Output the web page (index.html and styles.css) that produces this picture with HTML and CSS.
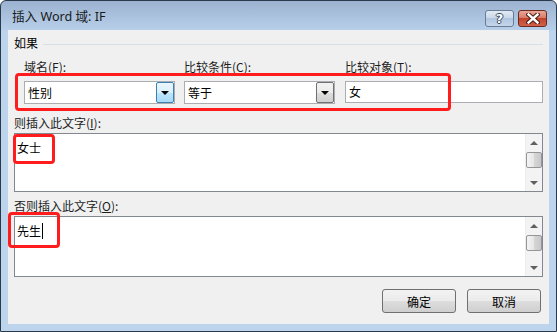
FILE: index.html
```html
<!DOCTYPE html>
<html lang="zh-CN">
<head>
    <meta charset="UTF-8">
    <title>插入 Word 域: IF</title>
    <link rel="stylesheet" href="styles.css">
</head>
<body>
    <div class="window">
        <div class="titlebar">
            <span class="title">插入 Word 域: IF</span>
            <div class="caption-buttons">
                <div class="cap-btn help">?</div>
                <div class="cap-btn close">
                    <svg width="14" height="11" viewBox="0 0 14 11">
                        <path d="M2.5 1.5 L11.5 9.5 M11.5 1.5 L2.5 9.5" stroke="#4a1b12" stroke-width="4.4" stroke-linecap="square"/>
                        <path d="M2.5 1.5 L11.5 9.5 M11.5 1.5 L2.5 9.5" stroke="#fff" stroke-width="2.4" stroke-linecap="square"/>
                    </svg>
                </div>
            </div>
        </div>

        <div class="client">
            <div class="group-title">
                <span>如果</span>
                <div class="group-line"></div>
            </div>

            <div class="fields">
                <div class="field field-name">
                    <label>域名(<u>F</u>):</label>
                    <div class="combo">
                        <span class="combo-text">性别</span>
                        <div class="drop active"><span class="arrow"></span></div>
                    </div>
                </div>
                <div class="field field-cond">
                    <label>比较条件(<u>C</u>):</label>
                    <div class="combo">
                        <span class="combo-text">等于</span>
                        <div class="drop"><span class="arrow"></span></div>
                    </div>
                </div>
                <div class="field field-target">
                    <label>比较对象(<u>T</u>):</label>
                    <div class="textbox">女</div>
                </div>
                <div class="mark mark-fields"></div>
            </div>

            <label class="area-label">则插入此文字(<u>I</u>):</label>
            <div class="textarea area-then">
                <div class="area-text">女士</div>
                <div class="scrollbar">
                    <div class="sb-arrow up"></div>
                    <div class="sb-thumb"></div>
                    <div class="sb-track"></div>
                    <div class="sb-arrow down"></div>
                </div>
                <div class="mark mark-then"></div>
            </div>

            <label class="area-label">否则插入此文字(<u>O</u>):</label>
            <div class="textarea area-else">
                <div class="area-text">先生<span class="caret"></span></div>
                <div class="scrollbar">
                    <div class="sb-arrow up"></div>
                    <div class="sb-thumb"></div>
                    <div class="sb-track"></div>
                    <div class="sb-arrow down"></div>
                </div>
                <div class="mark mark-else"></div>
            </div>

            <div class="actions">
                <button class="btn">确定</button>
                <button class="btn">取消</button>
            </div>
        </div>
    </div>
</body>
</html>
```

FILE: styles.css
```css
* {
    box-sizing: border-box;
    margin: 0;
    padding: 0;
}
body {
    font-family: "Noto Sans CJK SC", "Noto Sans", sans-serif;
    font-size: 12px;
    color: #000;
    background: #fff;
}
.window {
    width: 557px;
    height: 332px;
    border: 1px solid #2a3a4c;
    border-radius: 6px 6px 0 0;
    background: linear-gradient(to bottom, #9bb3d0 0, #b7cfe9 29px, #bcd4ec 30px, #bcd4ec 100%);
    display: flex;
    flex-direction: column;
}
.titlebar {
    height: 29px;
    display: flex;
    justify-content: space-between;
    padding-left: 11px;
    padding-right: 9px;
}
.title {
    line-height: 32px;
    color: #1a1a1a;
    font-family: "Noto Sans", "Noto Sans CJK SC", sans-serif;
    font-size: 12.6px;
}
.caption-buttons {
    display: flex;
    gap: 4px;
    padding-top: 9px;
}
.cap-btn {
    width: 29px;
    height: 17px;
    border: 1px solid #6a7c93;
    border-radius: 3px;
    display: flex;
    align-items: center;
    justify-content: center;
}
.help {
    background: linear-gradient(to bottom, #e2ebf5 0, #c9d8ea 45%, #b0c5de 50%, #c4d6ec 100%);
    color: #fff;
    font-family: "DejaVu Sans", sans-serif;
    font-weight: bold;
    font-size: 13px;
    text-shadow: -1px 0 #3a4a60, 1px 0 #3a4a60, 0 -1px #3a4a60, 0 1px #3a4a60;
}
.close {
    border-color: #6b2a20;
    background: linear-gradient(to bottom, #e9a899 0, #d77d6a 45%, #c0442c 50%, #d2624a 100%);
}
.client {
    flex: 1;
    margin: 0 7px 7px 7px;
    background: #f0f0f0;
    padding: 0 6px;
    display: flex;
    flex-direction: column;
}
.group-title {
    display: flex;
    align-items: center;
    gap: 5px;
    margin-top: 6px;
    height: 14px;
    line-height: 14px;
}
.group-line {
    flex: 1;
    border-top: 1px solid #d5dfe5;
    margin-top: 3px;
}
.fields {
    position: relative;
    display: flex;
    gap: 9px;
    margin-top: 10px;
    padding-left: 10px;
}
.field {
    display: flex;
    flex-direction: column;
    gap: 7px;
}
.field label {
    line-height: 14px;
    color: #1e1e1e;
}
.field-name, .field-cond {
    width: 151px;
}
.field-target {
    flex: 1;
    margin-left: 1px;
}
.combo {
    height: 23px;
    border: 1px solid #abadb3;
    background: #fff;
    display: flex;
    align-items: center;
    justify-content: space-between;
    padding-left: 3px;
}
.drop {
    width: 18px;
    height: 21px;
    border: 1px solid #707070;
    border-radius: 2px;
    background: linear-gradient(to bottom, #f2f2f2 0, #ebebeb 50%, #dddddd 51%, #cfcfcf 100%);
    display: flex;
    align-items: center;
    justify-content: center;
}
.drop.active {
    border-color: #3c7fb1;
    background: linear-gradient(to bottom, #eaf6fd 0, #d9f0fc 50%, #bee6fd 51%, #a7d9f5 100%);
}
.arrow {
    width: 0;
    height: 0;
    border-left: 4px solid transparent;
    border-right: 4px solid transparent;
    border-top: 4px solid #000;
}
.textbox {
    height: 22px;
    border: 1px solid #abadb3;
    background: #fff;
    line-height: 20px;
    padding-left: 3px;
}
.mark {
    position: absolute;
    border: 3px solid #ff1c1c;
    border-radius: 4px;
    pointer-events: none;
}
.mark-fields {
    left: 1px;
    top: 13px;
    width: 436px;
    height: 38px;
}
.area-label {
    display: block;
    line-height: 14px;
    margin-top: 12px;
    margin-bottom: 3px;
    color: #1e1e1e;
}
.textarea {
    position: relative;
    display: flex;
    border: 1px solid #828790;
    background: #fff;
}
.area-then {
    height: 59px;
}
.area-else {
    height: 61px;
}
.area-label:nth-of-type(2) {
    margin-top: 7px;
}
.area-text {
    flex: 1;
    padding: 6px 2px;
    line-height: 16px;
    font-size: 12px;
}
.caret {
    display: inline-block;
    width: 1px;
    height: 16px;
    background: #000;
    vertical-align: top;
    margin-left: 1px;
}
.scrollbar {
    width: 17px;
    background: #f3f3f3;
    border-left: 1px solid #ececec;
    display: flex;
    flex-direction: column;
}
.sb-arrow {
    height: 17px;
    display: flex;
    align-items: center;
    justify-content: center;
}
.sb-arrow::after {
    content: "";
    width: 0;
    height: 0;
    border-left: 4px solid transparent;
    border-right: 4px solid transparent;
}
.sb-arrow.up::after {
    border-bottom: 4px solid #606060;
}
.sb-arrow.down::after {
    border-top: 4px solid #606060;
}
.sb-thumb {
    height: 16px;
    margin: 1px 0 0 0;
    border: 1px solid #969696;
    border-radius: 2px;
    background: linear-gradient(to right, #f4f4f4 0, #e6e6e6 50%, #d6d6d6 51%, #c8c8c8 100%);
}
.sb-track {
    flex: 1;
}
.mark-then {
    left: -2px;
    top: 0;
    width: 42px;
    height: 30px;
}
.mark-else {
    left: -7px;
    top: -5px;
    width: 52px;
    height: 36px;
}
.actions {
    display: flex;
    justify-content: flex-end;
    gap: 11px;
    margin-top: 12px;
    padding-right: 2px;
}
.btn {
    width: 74px;
    height: 24px;
    border: 1px solid #707070;
    border-radius: 3px;
    background: linear-gradient(to bottom, #f2f2f2 0, #ebebeb 50%, #dddddd 51%, #cfcfcf 100%);
    font-family: "Noto Sans CJK SC", sans-serif;
    font-size: 12px;
    color: #000;
}
```
